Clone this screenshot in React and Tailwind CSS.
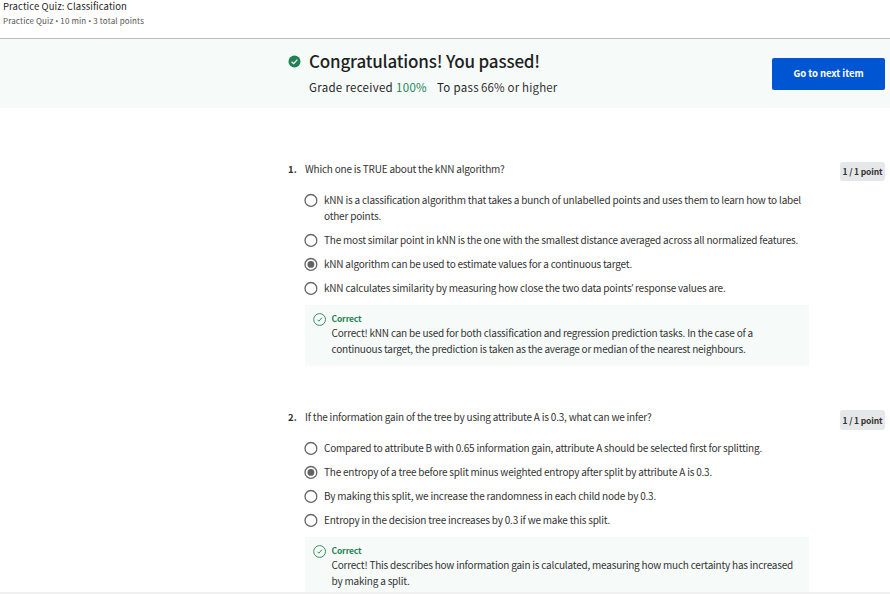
import { useLayoutEffect, useRef, useState } from "react";

// One line of text, tracked so that it spans the given width.
function Line({ width, className = "", children }) {
  const ref = useRef(null);
  const [tracking, setTracking] = useState(0);
  useLayoutEffect(() => {
    const natural = ref.current.getBoundingClientRect().width;
    const count = ref.current.textContent.length;
    setTracking((width - natural) / count);
  }, []);
  // Bullets and curly quotes are full-width in the CJK family.
  const parts = typeof children === "string" ? children.split(/([•’])/) : [children];
  return (
    <span
      ref={ref}
      className={`inline-block whitespace-pre ${className}`}
      style={{ letterSpacing: `${tracking}px` }}
    >
      {parts.map((p, i) =>
        p === "•" || p === "’" ? (
          <span key={i} className="font-['Open_Sans',sans-serif] leading-none">{p}</span>
        ) : (
          p
        )
      )}
    </span>
  );
}

const questions = [
  {
    number: "1.",
    text: ["Which one is TRUE about the kNN algorithm?", 199.5],
    options: [
      {
        lines: [
          ["kNN is a classification algorithm that takes a bunch of unlabelled points and uses them to learn how to label", 477],
          ["other points.", 57],
        ],
      },
      { lines: [["The most similar point in kNN is the one with the smallest distance averaged across all normalized features.", 474]] },
      { lines: [["kNN algorithm can be used to estimate values for a continuous target.", 308]], checked: true },
      { lines: [["kNN calculates similarity by measuring how close the two data points’ response values are.", 401.5]] },
    ],
    feedback: [
      ["Correct! kNN can be used for both classification and regression prediction tasks. In the case of a", 421.5],
      ["continuous target, the prediction is taken as the average or median of the nearest neighbours.", 414],
    ],
    badge: "h-[19px]",
  },
  {
    number: "2.",
    text: ["If the information gain of the tree by using attribute A is 0.3, what can we infer?", 346.5],
    options: [
      { lines: [["Compared to attribute B with 0.65 information gain, attribute A should be selected first for splitting.", 438]] },
      { lines: [["The entropy of a tree before split minus weighted entropy after split by attribute A is 0.3.", 388]], checked: true },
      { lines: [["By making this split, we increase the randomness in each child node by 0.3.", 332]] },
      { lines: [["Entropy in the decision tree increases by 0.3 if we make this split.", 286]] },
    ],
    feedback: [
      ["Correct! This describes how information gain is calculated, measuring how much certainty has increased", 461.5],
      ["by making a split.", 78],
    ],
    badge: "h-[20px]",
  },
];

function Radio({ checked }) {
  return (
    <svg className="mt-px h-[14px] w-[14px] shrink-0" viewBox="0 0 14 14" fill="none">
      <circle cx="6.9" cy="7.4" r="5.9" stroke="#666" strokeWidth="1.3" />
      {checked && <circle cx="6.9" cy="7.4" r="3.4" fill="#636363" />}
    </svg>
  );
}

function Question({ q }) {
  return (
    <section className="flex h-[248px] items-start pl-[288px] pr-[5px]">
      <div className="w-[17px] shrink-0 text-[9.5px] leading-4 font-bold">
        <Line width={9}>{q.number}</Line>
      </div>
      <div className="w-[504px] shrink-0">
        <h2 className="h-[31px] leading-4">
          <Line width={q.text[1]}>{q.text[0]}</Line>
        </h2>
        <div className="flex flex-col gap-2">
          {q.options.map((o) => (
            <div key={o.lines[0][0]} className="-ml-px flex items-start gap-[6px]">
              <Radio checked={o.checked} />
              <div className="flex flex-col items-start">
                {o.lines.map(([t, w]) => (
                  <Line key={t} width={w}>{t}</Line>
                ))}
              </div>
            </div>
          ))}
        </div>
        <div className="mt-[9px] flex h-[61px] items-start gap-[4.5px] bg-[#f6fbfa] pt-[6px] pl-2">
          <svg className="mt-[2px] h-[13px] w-[14px] shrink-0" viewBox="0 0 14 13" fill="none" stroke="#1f8354">
            <circle cx="6.6" cy="6.5" r="5.9" strokeWidth="0.9" />
            <path d="M4.4 6.7 5.9 8.2 8.9 4.7" strokeWidth="0.9" />
          </svg>
          <div className="flex flex-col items-start">
            <Line width={30} className="h-[14px] text-[8.5px] leading-[15px] font-bold text-[#1f8354]">Correct</Line>
            {q.feedback.map(([t, w]) => (
              <Line key={t} width={w}>{t}</Line>
            ))}
          </div>
        </div>
      </div>
      <div className={`mt-px ml-auto flex w-[45px] items-center justify-center rounded-[3px] bg-[#e5e7e8] pb-px text-[8.5px] font-bold ${q.badge}`}>
        <Line width={40}>1 / 1 point</Line>
      </div>
    </section>
  );
}

export default function App() {
  return (
    <div className="flex h-[594px] w-[890px] flex-col overflow-hidden bg-white font-['Noto_Sans_CJK_SC','Noto_Sans',sans-serif] text-[10px] leading-4 text-[#333]">
      <header className="flex h-[39px] shrink-0 flex-col items-start border-b border-[#bbb] pl-[3px]">
        <Line width={124} className="h-[14px] text-[9.5px] leading-[13px] text-[#1f1f1f]">Practice Quiz: Classification</Line>
        <Line width={141} className="text-[8px] leading-[14px] text-[#555]">Practice Quiz • 10 min • 3 total points</Line>
      </header>
      <div className="flex h-[69px] shrink-0 items-start bg-[#f6fbfa] pr-[5px] pl-[288px]">
        <svg className="mt-[16px] h-[13px] w-[13px] shrink-0" viewBox="0 0 13 13" fill="none">
          <circle cx="6.5" cy="6.5" r="6" fill="#1f8354" />
          <path d="M3.6 6.7 5.6 8.6 9.4 4.6" stroke="#fff" strokeWidth="1.3" />
        </svg>
        <div className="ml-[8px] flex flex-col items-start pt-[10px]">
          <Line width={231} className="text-[17px] leading-6 font-medium text-[#1f1f1f]">Congratulations! You passed!</Line>
          <div className="mt-[5px] flex text-[11.5px] leading-[18px]">
            <Line width={84} className="mr-[3px] text-[#1f1f1f]">Grade received</Line>
            <Line width={31} className="mr-[10px] text-[#1f8354]">100%</Line>
            <Line width={42} className="mr-[2px] text-[#1f1f1f]">To pass</Line>
            <Line width={76.5}>66% or higher</Line>
          </div>
        </div>
        <button className="mt-[19px] ml-auto flex h-8 w-[113px] items-center justify-center rounded-[2px] bg-[#0056d2] pb-[2px] text-[9.5px] font-bold text-white">
          <Line width={70}>Go to next item</Line>
        </button>
      </div>
      <main className="mt-[53px] h-[431px] shrink-0 overflow-hidden">
        {questions.map((q) => (
          <Question key={q.number} q={q} />
        ))}
      </main>
      <div className="h-[2px] shrink-0 bg-[#f0f0f0]" />
    </div>
  );
}
